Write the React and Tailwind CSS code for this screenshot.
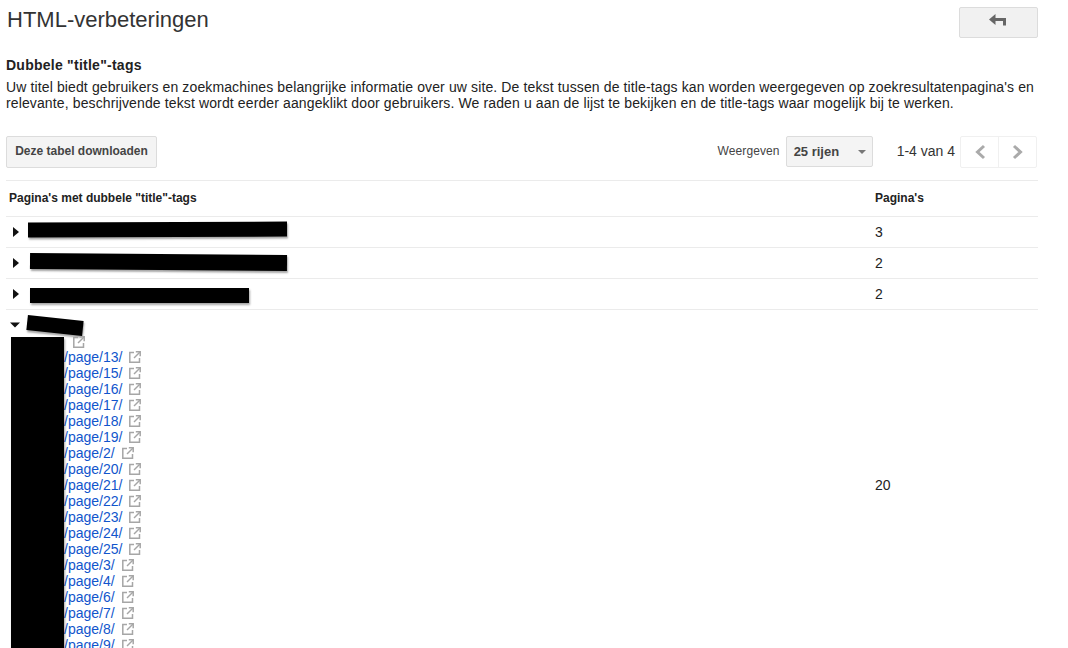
const rows = [
  { count: 3 },
  { count: 2 },
  { count: 2 },
];

const pages = ["13", "15", "16", "17", "18", "19", "2", "20", "21", "22", "23", "24", "25", "3", "4", "6", "7", "8", "9"];

const ExternalIcon = ({ className }) => (
  <svg width="12" height="12" viewBox="0 0 12 12" fill="none" stroke="#a6a6a6" strokeWidth="1.5" className={className}>
    <path d="M5 1.5H.8v9.7h9.7V7" />
    <path d="M6.8 .8h4.4v4.4" />
    <path d="M11 1 5 7" />
  </svg>
);

const PageLink = ({ label }) => (
  <div className="flex h-4 items-center pl-[55px]">
    <a className="text-[#1155cc]">{label}</a>
    <ExternalIcon className="ml-[7px] shrink-0" />
  </div>
);

const Caret = ({ open }) => (
  <svg width="10" height="10" viewBox="0 0 10 10" className="shrink-0" fill="#111">
    {open ? <path d="M0 2.5h10L5 7.5z" /> : <path d="M2 0l6 5-6 5z" />}
  </svg>
);

const Redaction = ({ className }) => (
  <div className={`absolute bg-black shadow-[1px_2px_2px_rgba(0,0,0,0.35)] ${className}`} />
);

export default function App() {
  return (
    <div className="relative h-[648px] w-[1068px] overflow-hidden bg-white text-[14px] leading-4 text-[#222] font-['Liberation_Sans',Arial,sans-serif]">
      <div className="w-[1038px] pl-1.5">
        <div className="flex items-start justify-between">
          <h1 className="pt-[8px] pl-px text-[22px] leading-6 text-[#333]">HTML-verbeteringen</h1>
          <button className="mt-[7px] flex h-[31px] w-[79px] items-center justify-center rounded-[2px] border border-[#dcdcdc] bg-[#f1f1f1]">
            <svg width="17" height="12" viewBox="0 0 17 12" fill="#666" className="-mt-[5px] -ml-[2px]">
              <path d="M0 5.5 6.5 0v4H17v7.5h-3V7H6.5v4z" />
            </svg>
          </button>
        </div>

        <h2 className="mt-[19px] text-[14px] font-bold tracking-[0.25px] leading-4 text-[#222]">Dubbele "title"-tags</h2>
        <p className="mt-[6px] w-[1040px] tracking-[0.124px] text-[#222]">
          Uw titel biedt gebruikers en zoekmachines belangrijke informatie over uw site. De tekst tussen de title-tags kan worden weergegeven op zoekresultatenpagina's en relevante, beschrijvende tekst wordt eerder aangeklikt door gebruikers. We raden u aan de lijst te bekijken en de title-tags waar mogelijk bij te werken.
        </p>

        <div className="mt-[25px] flex h-8 items-center justify-between pr-px">
          <button className="h-8 w-[151px] rounded-[2px] border border-[#dcdcdc] bg-[#f4f4f4] pb-[2px] text-[12px] font-bold text-[#444]">
            Deze tabel downloaden
          </button>
          <div className="flex items-center">
            <span className="mr-1.5 -mt-[2px] text-[12px] tracking-[0.1px] text-[#444]">Weergeven</span>
            <div className="-mt-px flex h-[31px] w-[87px] items-center justify-between rounded-[2px] border border-[#dcdcdc] bg-[#f4f4f4] pl-[7px] pr-[6px] text-[13px] font-bold text-[#444]">
              <span>25 rijen</span>
              <span className="h-0 w-0 border-x-[4px] border-t-[4px] border-x-transparent border-t-[#777]" />
            </div>
            <span className="ml-6 mr-[5px] -mt-[2px] text-[#333]">1-4 van 4</span>
            <div className="flex h-8 w-[77px] rounded-[2px] border border-[#f0f0f0]">
              <div className="flex flex-1 items-center justify-center border-r border-[#f0f0f0]">
                <svg width="12" height="16" viewBox="0 0 12 16" fill="none" stroke="#aaa" strokeWidth="3">
                  <path d="M10 2 3.5 8l6.5 6" />
                </svg>
              </div>
              <div className="flex flex-1 items-center justify-center">
                <svg width="12" height="16" viewBox="0 0 12 16" fill="none" stroke="#aaa" strokeWidth="3">
                  <path d="M2 2l6.5 6L2 14" />
                </svg>
              </div>
            </div>
          </div>
        </div>

        <div className="mt-[12px] flex h-[37px] items-center border-y border-[#ebebeb] pb-[2px] text-[12px] font-bold text-[#222]">
          <div className="w-[869px] pl-[3px]">Pagina's met dubbele "title"-tags</div>
          <div>Pagina's</div>
        </div>

        {rows.map((row, i) => (
          <div key={i} className="flex h-[31px] items-center border-b border-[#ebebeb]">
            <div className="flex w-[869px] items-center pl-[5px]">
              <Caret />
            </div>
            <div>{row.count}</div>
          </div>
        ))}

        <div className="flex items-center">
          <div className="w-[869px] pt-[10px] pl-[3px]">
            <div className="pl-px">
              <Caret open />
            </div>
            <div className="mt-[3px] pb-[7px]">
              <div className="h-4" />
              {pages.map((p) => (
                <PageLink key={p} label={`/page/${p}/`} />
              ))}
            </div>
          </div>
          <div>20</div>
        </div>
      </div>

      {/* black marker over the urls */}
      <Redaction className="left-[28px] top-[222px] h-[15px] w-[259px] -rotate-[0.2deg]" />
      <Redaction className="left-[30px] top-[254px] h-[16px] w-[257px] rotate-[0.4deg]" />
      <Redaction className="left-[30px] top-[288px] h-[15px] w-[219px]" />
      <Redaction className="left-[27px] top-[318px] h-[15px] w-[56px] rotate-[6deg]" />
      <Redaction className="left-[11px] top-[337px] h-[320px] w-[53px]" />
      <ExternalIcon className="absolute left-[73px] top-[336px]" />
    </div>
  );
}
